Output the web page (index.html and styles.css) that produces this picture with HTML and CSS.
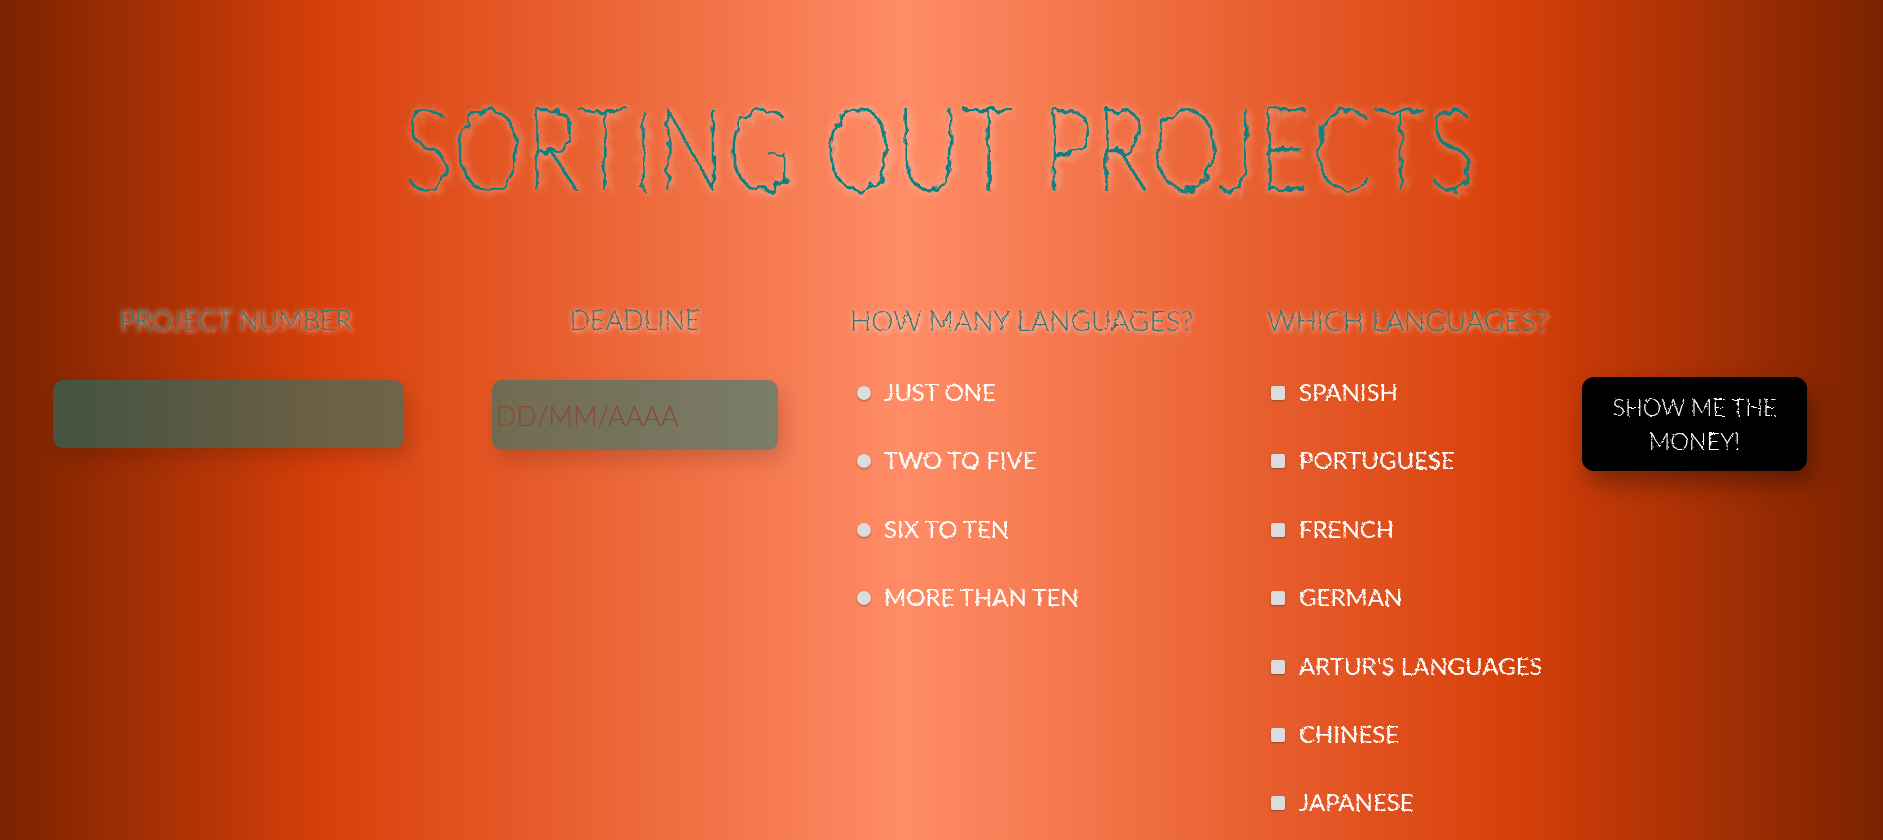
FILE: index.html

```html
<!DOCTYPE html>
<html lang="en">
<head>
  <meta charset="UTF-8" />
  <title>Sorting out projects</title>
  <link rel="stylesheet" href="styles.css">
</head>
<body>
  <svg class="filter-defs" width="0" height="0" aria-hidden="true">
    <filter id="rough-big" x="-5%" y="-20%" width="110%" height="140%">
      <feTurbulence type="fractalNoise" baseFrequency="0.09" numOctaves="2" seed="4" result="n" />
      <feDisplacementMap in="SourceGraphic" in2="n" scale="10" />
    </filter>
    <filter id="rough-small" x="-5%" y="-20%" width="110%" height="140%">
      <feTurbulence type="fractalNoise" baseFrequency="0.25" numOctaves="2" seed="7" result="n" />
      <feDisplacementMap in="SourceGraphic" in2="n" scale="3" />
    </filter>
  </svg>

  <h1 class="title">Sorting out projects</h1>

  <form class="form-row">
    <div class="col col-number">
      <h3 class="col-title">Project number</h3>
      <input class="field field-number" type="text" />
    </div>
    <div class="col col-deadline">
      <h3 class="col-title">Deadline</h3>
      <input class="field field-deadline" type="text" placeholder="DD/MM/AAAA" />
    </div>
    <div class="col col-many">
      <h3 class="col-title">How many languages?</h3>
      <ul class="options">
        <li><label><input type="radio" name="many" /><span>Just one</span></label></li>
        <li><label><input type="radio" name="many" /><span>Two to five</span></label></li>
        <li><label><input type="radio" name="many" /><span>Six to ten</span></label></li>
        <li><label><input type="radio" name="many" /><span>More than ten</span></label></li>
      </ul>
    </div>
    <div class="col col-which">
      <h3 class="col-title">Which languages?</h3>
      <ul class="options">
        <li><label><input type="checkbox" /><span>Spanish</span></label></li>
        <li><label><input type="checkbox" /><span>Portuguese</span></label></li>
        <li><label><input type="checkbox" /><span>French</span></label></li>
        <li><label><input type="checkbox" /><span>German</span></label></li>
        <li><label><input type="checkbox" /><span>Artur's languages</span></label></li>
        <li><label><input type="checkbox" /><span>Chinese</span></label></li>
        <li><label><input type="checkbox" /><span>Japanese</span></label></li>
      </ul>
    </div>
    <div class="col col-submit">
      <button class="submit" type="button"><span>Show me the money!</span></button>
    </div>
  </form>
</body>
</html>
```

FILE: styles.css

```css
html, body {
  height: 100%;
}
body {
  margin: 0;
  font-family: Lato, "Open Sans", sans-serif;
  text-transform: uppercase;
  overflow: hidden;
  background: linear-gradient(to right, #7a2200 0%, #d8400a 17.5%, #ff8c66 48%, #d8400a 80%, #7a2200 100%);
  color: #fff;
}
.filter-defs {
  display: block;
  height: 0;
}
.title {
  margin: 0;
  padding-top: 78px;
  height: 190px;
  font-size: 88px;
  line-height: 130px;
  font-weight: 100;
  letter-spacing: 3.5px;
  text-align: center;
  color: #0f8080;
  -webkit-text-stroke: 1.5px #0f8080;
  text-shadow: 1px 1px 7px #fff, 1px 1px 7px rgba(255, 255, 255, 0.7);
  transform: scaleY(1.3);
  filter: url(#rough-big);
}
.form-row {
  display: flex;
  align-items: flex-start;
  padding-left: 53px;
}
.col-title {
  margin: 0;
  height: 108px;
  padding-top: 34px;
  box-sizing: border-box;
  font-size: 27px;
  line-height: 36px;
  font-weight: 300;
  text-align: center;
  color: #3a7570;
  text-shadow: 1px 1px 5px #fff;
  filter: url(#rough-small);
}
.col-number { width: 365px; margin-right: 74px; }
.col-deadline { width: 286px; margin-right: 72px; }
.col-many { width: 417px; }
.col-which { width: 315px; }
.col-many .col-title, .col-which .col-title {
  text-align: left;
  white-space: nowrap;
  font-size: 28px;
}
.col-submit {
  width: 225px;
  padding-top: 109px;
}
.field {
  display: block;
  box-sizing: border-box;
  height: 68px;
  margin-top: 4px;
  padding: 0 4px;
  border: none;
  border-radius: 10px;
  outline: none;
  background: rgba(0, 128, 128, 0.5);
  box-shadow: 6px 10px 20px rgba(0, 0, 0, 0.15);
  font-family: inherit;
  font-size: 27px;
  font-weight: 300;
}
.field-number { width: 351px; }
.field-deadline { width: 286px; height: 70px; }
.field::placeholder {
  color: #8a4a30;
  opacity: 1;
}
.options {
  list-style: none;
  margin: 0;
  padding: 0;
}
.options li {
  height: 68.4px;
}
.options label {
  display: flex;
  align-items: center;
  height: 32px;
  padding-left: 7px;
}
.col-which .options label {
  padding-left: 4px;
}
.options span {
  font-size: 24px;
  line-height: 32px;
  color: #fff;
  white-space: nowrap;
  filter: url(#rough-small);
}
.options input {
  appearance: none;
  flex: none;
  margin: 2px 13px 0 0;
  width: 14px;
  height: 14px;
  background: #dcdcdc;
  box-shadow: 0 1px 2px rgba(90, 60, 50, 0.6);
}
.options input[type="radio"] {
  border-radius: 50%;
}
.options input[type="checkbox"] {
  border-radius: 2px;
  margin-right: 14px;
}
.submit {
  display: block;
  box-sizing: border-box;
  width: 225px;
  height: 94px;
  padding: 8px 20px;
  border: none;
  border-radius: 12px;
  background: #000;
  box-shadow: 6px 12px 24px rgba(0, 0, 0, 0.35);
  color: #fff;
  font-family: inherit;
  font-size: 23.5px;
  line-height: 34px;
  font-weight: 300;
  text-transform: uppercase;
}
.submit span {
  display: block;
  filter: url(#rough-small);
}
```
